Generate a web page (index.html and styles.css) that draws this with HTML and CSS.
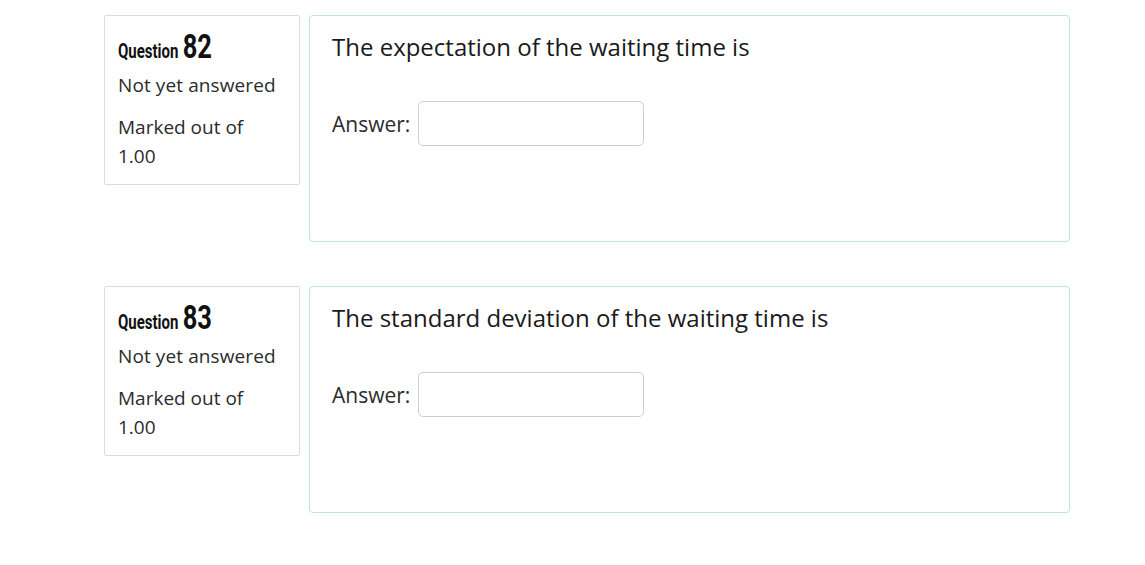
FILE: index.html
```html
<!DOCTYPE html>
<html>
<head>
<meta charset="utf-8">
<link rel="stylesheet" href="styles.css">
</head>
<body>
<div class="page">
  <div class="que">
    <div class="info">
      <h3 class="qno"><span class="qno-inner"><span class="qlabel">Question</span> <span class="qnum">82</span></span></h3>
      <div class="state">Not yet answered</div>
      <div class="grade">Marked out of 1.00</div>
    </div>
    <div class="content">
      <div class="qtext">The expectation of the waiting time is</div>
      <div class="ablock">
        <label class="alabel">Answer:</label>
        <input class="answer" type="text">
      </div>
    </div>
  </div>
  <div class="que">
    <div class="info">
      <h3 class="qno"><span class="qno-inner"><span class="qlabel">Question</span> <span class="qnum">83</span></span></h3>
      <div class="state">Not yet answered</div>
      <div class="grade">Marked out of 1.00</div>
    </div>
    <div class="content">
      <div class="qtext">The standard deviation of the waiting time is</div>
      <div class="ablock">
        <label class="alabel">Answer:</label>
        <input class="answer" type="text">
      </div>
    </div>
  </div>
</div>
</body>
</html>
```
FILE: styles.css
```css
html, body {
  margin: 0;
  padding: 0;
  background: #fff;
}
body {
  font-family: "Open Sans", "Liberation Sans", sans-serif;
  color: #1d1d1d;
}
.page {
  padding: 15px 0 0 104px;
  display: flex;
  flex-direction: column;
  gap: 44px;
}
.que {
  display: flex;
  align-items: flex-start;
  gap: 9px;
}
.info {
  box-sizing: border-box;
  width: 196px;
  height: 170px;
  border: 1px solid #dcdcdc;
  border-radius: 2px;
  padding: 14px 13px 0 13px;
}
.qno {
  margin: 0;
  font-weight: normal;
  line-height: 32px;
  height: 32px;
  font-family: "Roboto", "Liberation Sans", sans-serif;
  color: #111;
  white-space: nowrap;
}
.qno-inner {
  display: inline-block;
  transform: scaleX(0.75);
  transform-origin: left center;
}
.qlabel {
  font-size: 20px;
  font-weight: bold;
}
.qnum {
  font-size: 34px;
  font-weight: bold;
  margin-left: 1px;
}
.state {
  font-size: 19px;
  line-height: 29px;
  margin-top: 9px;
  color: #2b2b2b;
  letter-spacing: 0.1px;
}
.grade {
  font-size: 19px;
  line-height: 29px;
  margin-top: 13px;
  color: #2b2b2b;
  width: 150px;
}
.content {
  box-sizing: border-box;
  width: 761px;
  height: 227px;
  border: 1px solid #bfe1e9;
  border-radius: 4px;
  padding: 15px 22px;
}
.qtext {
  font-size: 24px;
  line-height: 32px;
  color: #1a1a1a;
}
.ablock {
  margin-top: 38px;
  display: flex;
  align-items: center;
  gap: 8px;
}
.alabel {
  font-size: 21px;
  color: #2b2b2b;
}
.answer {
  box-sizing: border-box;
  width: 226px;
  height: 45px;
  border: 1px solid #cfcfcf;
  border-radius: 5px;
  background: #fff;
  margin: 0;
  padding: 0 10px;
  font-size: 18px;
}
```
